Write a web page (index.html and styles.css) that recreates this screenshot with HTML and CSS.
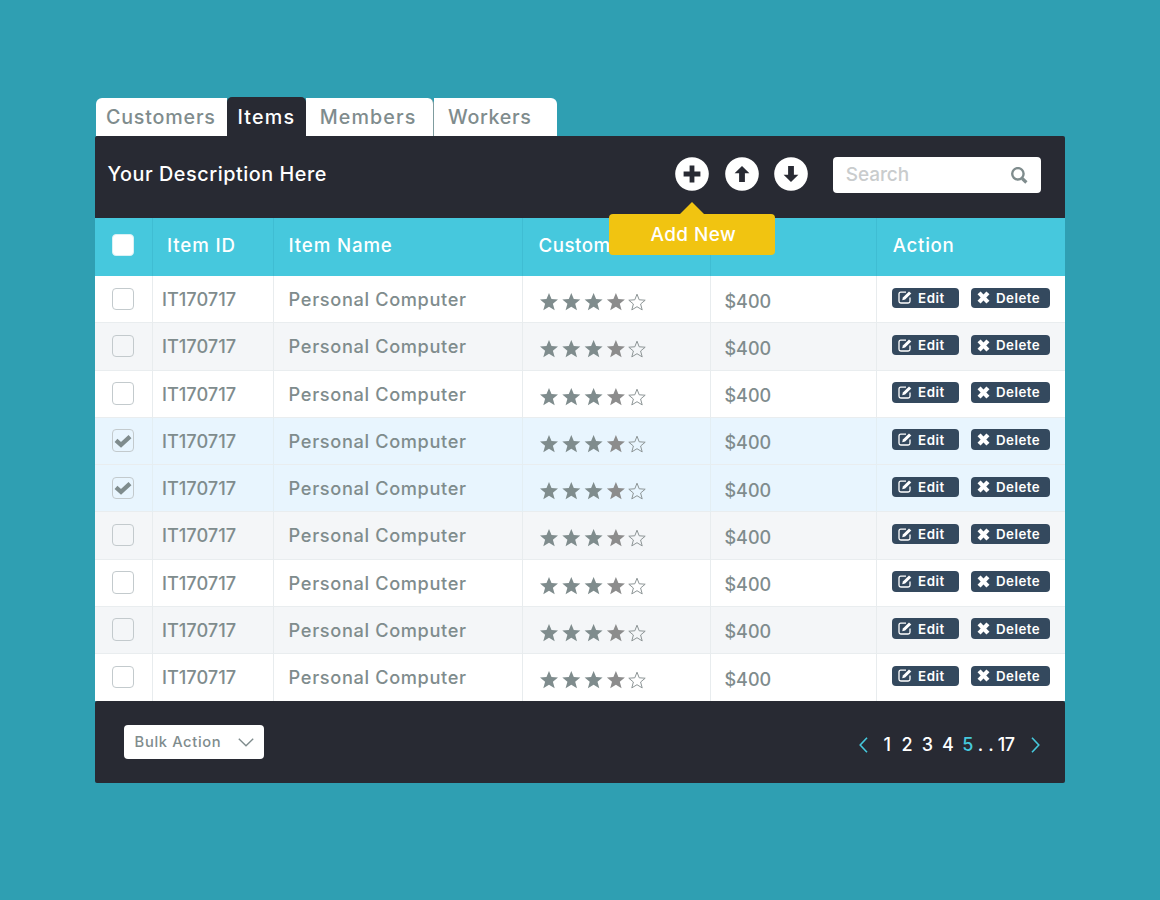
FILE: index.html
```html
<!DOCTYPE html>
<html lang="en">
<head>
<meta charset="utf-8">
<title>Items</title>
<link rel="stylesheet" href="styles.css">
</head>
<body>
<svg class="defs" width="0" height="0" aria-hidden="true">
  <symbol id="stars" viewBox="0 0 108 18">
    <g fill="#7f8c8d">
      <path id="star" d="M9 0l2.5 6.1 6.5.4-5.1 4.2 1.8 6.6L9 13.7l-5.7 3.6 1.8-6.6L0 6.5l6.500-.4z"/>
      <use href="#star" x="22.3"/>
      <use href="#star" x="44.6"/>
    </g>
    <use href="#star" x="66.9" fill="#8c8c8c"/>
    <path d="M97 1.2l2.2 5.6 6 .4-4.600 3.800 1.600 5.900-5.200-3.200-5.200 3.200 1.600-5.900-4.600-3.800 6-.4z" fill="none" stroke="#8d9596" stroke-width="1" stroke-linejoin="round"/>
  </symbol>
  <symbol id="edit" viewBox="0 0 14 13">
    <path d="M8 1.2H2.8Q1 1.2 1 3v7.2Q1 12 2.8 12h7.4q1.8 0 1.8-1.8V6.4" fill="none" stroke="#fff" stroke-width="1.3"/>
    <path d="M4.2 9.3l.7-2.900L11 .5l2.300 2L7.100 8.600z" fill="#fff"/>
  </symbol>
  <symbol id="cross" viewBox="0 0 12 12">
    <path d="M1.9 1.700l8.200 8.600M10.100 1.700l-8.200 8.600" stroke="#fff" stroke-width="3.900"/>
  </symbol>
  <symbol id="tick" viewBox="0 0 18 14">
    <path d="M2 6.400l5 4.400L16 2.600" fill="none" stroke="#7f8c8d" stroke-width="4.300"/>
  </symbol>
</svg>

<main class="panel">
  <nav class="tabs">
    <a class="tab tab-customers">Customers</a>
    <a class="tab tab-items active">Items</a>
    <a class="tab tab-members">Members</a>
    <a class="tab tab-workers">Workers</a>
  </nav>

  <header class="toolbar">
    <h1 class="title">Your Description Here</h1>
    <div class="tools">
      <div class="tool">
        <svg width="34" height="34" viewBox="0 0 34 34"><circle cx="17" cy="17" r="16.8" fill="#fff"/><path d="M17 8.6v16.8M8.6 17h16.8" stroke="#282a33" stroke-width="4.8"/></svg>
        <div class="tooltip">Add New</div>
      </div>
      <svg width="34" height="34" viewBox="0 0 34 34"><circle cx="17" cy="17" r="16.8" fill="#fff"/><path d="M17 9l7.4 7.2h-4.5V25h-5.8v-8.8H9.6z" fill="#282a33"/></svg>
      <svg class="down" width="34" height="34" viewBox="0 0 34 34"><circle cx="17" cy="17" r="16.8" fill="#fff"/><path d="M17 25l7.4-7.2h-4.5V9h-5.8v8.8H9.6z" fill="#282a33"/></svg>
    </div>
    <div class="search">
      <span>Search</span>
      <svg width="18" height="18" viewBox="0 0 18 18" fill="none" stroke="#7f8c8d"><circle cx="7.9" cy="6.8" r="5.700" stroke-width="2.400"/><path d="M12.2 11.500l4.200 4" stroke-width="3.200"/></svg>
    </div>
  </header>

  <section class="table">
    <div class="head">
      <div class="pick"><i class="box"></i></div>
      <div class="h-id">Item ID</div>
      <div class="h-name">Item Name</div>
      <div class="h-rate">Customer</div>
      <div></div>
      <div class="h-action">Action</div>
    </div>
    <div class="rows">
      <div class="row">
        <div class="pick"><i class="box"></i></div><div class="id">IT170717</div><div class="name">Personal Computer</div>
        <div class="rate"><svg><use href="#stars"/></svg></div><div class="price">$400</div>
        <div class="actions"><a class="btn edit"><svg><use href="#edit"/></svg>Edit</a><a class="btn delete"><svg><use href="#cross"/></svg>Delete</a></div>
      </div>
      <div class="row alt">
        <div class="pick"><i class="box"></i></div><div class="id">IT170717</div><div class="name">Personal Computer</div>
        <div class="rate"><svg><use href="#stars"/></svg></div><div class="price">$400</div>
        <div class="actions"><a class="btn edit"><svg><use href="#edit"/></svg>Edit</a><a class="btn delete"><svg><use href="#cross"/></svg>Delete</a></div>
      </div>
      <div class="row">
        <div class="pick"><i class="box"></i></div><div class="id">IT170717</div><div class="name">Personal Computer</div>
        <div class="rate"><svg><use href="#stars"/></svg></div><div class="price">$400</div>
        <div class="actions"><a class="btn edit"><svg><use href="#edit"/></svg>Edit</a><a class="btn delete"><svg><use href="#cross"/></svg>Delete</a></div>
      </div>
      <div class="row selected">
        <div class="pick"><i class="box"><svg><use href="#tick"/></svg></i></div><div class="id">IT170717</div><div class="name">Personal Computer</div>
        <div class="rate"><svg><use href="#stars"/></svg></div><div class="price">$400</div>
        <div class="actions"><a class="btn edit"><svg><use href="#edit"/></svg>Edit</a><a class="btn delete"><svg><use href="#cross"/></svg>Delete</a></div>
      </div>
      <div class="row selected">
        <div class="pick"><i class="box"><svg><use href="#tick"/></svg></i></div><div class="id">IT170717</div><div class="name">Personal Computer</div>
        <div class="rate"><svg><use href="#stars"/></svg></div><div class="price">$400</div>
        <div class="actions"><a class="btn edit"><svg><use href="#edit"/></svg>Edit</a><a class="btn delete"><svg><use href="#cross"/></svg>Delete</a></div>
      </div>
      <div class="row alt">
        <div class="pick"><i class="box"></i></div><div class="id">IT170717</div><div class="name">Personal Computer</div>
        <div class="rate"><svg><use href="#stars"/></svg></div><div class="price">$400</div>
        <div class="actions"><a class="btn edit"><svg><use href="#edit"/></svg>Edit</a><a class="btn delete"><svg><use href="#cross"/></svg>Delete</a></div>
      </div>
      <div class="row">
        <div class="pick"><i class="box"></i></div><div class="id">IT170717</div><div class="name">Personal Computer</div>
        <div class="rate"><svg><use href="#stars"/></svg></div><div class="price">$400</div>
        <div class="actions"><a class="btn edit"><svg><use href="#edit"/></svg>Edit</a><a class="btn delete"><svg><use href="#cross"/></svg>Delete</a></div>
      </div>
      <div class="row alt">
        <div class="pick"><i class="box"></i></div><div class="id">IT170717</div><div class="name">Personal Computer</div>
        <div class="rate"><svg><use href="#stars"/></svg></div><div class="price">$400</div>
        <div class="actions"><a class="btn edit"><svg><use href="#edit"/></svg>Edit</a><a class="btn delete"><svg><use href="#cross"/></svg>Delete</a></div>
      </div>
      <div class="row">
        <div class="pick"><i class="box"></i></div><div class="id">IT170717</div><div class="name">Personal Computer</div>
        <div class="rate"><svg><use href="#stars"/></svg></div><div class="price">$400</div>
        <div class="actions"><a class="btn edit"><svg><use href="#edit"/></svg>Edit</a><a class="btn delete"><svg><use href="#cross"/></svg>Delete</a></div>
      </div>
    </div>
  </section>

  <footer class="foot">
    <div class="bulk"><span>Bulk Action</span>
      <svg width="16" height="9" viewBox="0 0 16 9"><path d="M.8.8L8 7.8 15.2.8" fill="none" stroke="#7f8c8d" stroke-width="1.4"/></svg>
    </div>
    <div class="pages">
      <svg width="9" height="16" viewBox="0 0 9 16"><path d="M8 .8L1.2 8 8 15.2" fill="none" stroke="#46c8dc" stroke-width="1.6"/></svg>
      <span class="p1">1</span><span class="p2">2</span><span class="p3">3</span><span class="p4">4</span><span class="p5">5</span><span class="dots">..</span><span class="p17">17</span>
      <svg width="9" height="16" viewBox="0 0 9 16"><path d="M1 .8L7.8 8 1 15.2" fill="none" stroke="#46c8dc" stroke-width="1.6"/></svg>
    </div>
  </footer>
</main>
</body>
</html>
```
FILE: styles.css
```css
* { box-sizing: border-box; }
body { margin: 0; min-height: 900px; background: #2f9fb2; font-family: Inter, "Open Sans", sans-serif; font-weight: 500; color: #7f8c8d; }
.defs { position: absolute; }
svg { display: block; flex: none; }
.panel { width: 969.5px; margin-left: 95.3px; padding-top: 97px; }

.tabs { display: flex; align-items: flex-end; height: 39px; }
.tab { height: 38.5px; line-height: 39px; background: #fff; border-radius: 6px 6px 0 0; font-size: 19.7px; font-weight: 450; }
.tab-customers { width: 131px; margin-left: .7px; padding-left: 10px; letter-spacing: .8px; border-top-right-radius: 0; }
.tab-items { width: 79.5px; height: 39px; line-height: 40px; padding-left: 10.5px; letter-spacing: 1.2px; }
.tab.active { background: #282a33; color: #fff; font-weight: 550; border-radius: 5px 5px 0 0; }
.tab-members { width: 127.5px; padding-left: 13.2px; letter-spacing: 1.1px; border-top-left-radius: 0; border-right: 1px solid #7f9c9f; }
.tab-workers { width: 123px; padding-left: 14px; letter-spacing: .65px; border-top-left-radius: 0; }

.toolbar { display: flex; height: 82px; padding: 21px 24px 0 12.2px; background: #282a33; border-radius: 2px 2px 0 0; }
.title { flex: 1; margin: 0; height: 34px; line-height: 35px; font-size: 19.8px; font-weight: 500; letter-spacing: .55px; color: #fff; }
.tools { display: flex; gap: 15.6px; margin-right: 25.2px; }
.tool { position: relative; height: 34px; }
.down { margin-top: -.4px; }
.tooltip { position: absolute; z-index: 1; left: -66px; top: 57.3px; width: 166px; height: 41.2px; padding-left: 41.5px; border-radius: 4px; background: #f1c411; color: #fff; font-size: 19px; line-height: 41px; letter-spacing: .4px; }
.tooltip::before { content: ""; position: absolute; left: 70px; top: -12px; border: 13px solid transparent; border-top: 0; border-bottom-color: #f1c411; }
.search { display: flex; justify-content: space-between; width: 207.5px; height: 35.5px; padding: 9.5px 13px 0 12.5px; background: #fff; border-radius: 4px; }
.search span { line-height: 16px; font-size: 19px; letter-spacing: -.1px; color: #c9cccd; font-weight: 450; }

.head, .row { display: grid; grid-template-columns: 57px 121px 249px 188px 166px 188.5px; }
.head { height: 58px; background: #46c8dd; color: #fff; font-size: 18.7px; line-height: 55.5px; letter-spacing: .85px; }
.head > div + div { border-left: 1px solid #3fbdd3; }
.h-id { padding-left: 13.8px; }
.h-name { padding-left: 14.3px; }
.h-rate { padding-left: 15.3px; letter-spacing: .5px; }
.h-action { padding-left: 15.5px; letter-spacing: .7px; }

.rows { height: 424.5px; overflow: hidden; background: #fff; }
.row { height: 47.25px; line-height: 47.5px; font-size: 18.2px; font-weight: 450; border-bottom: 1px solid #e9edef; }
.row > div + div { border-left: 1px solid #e8ecee; }
.row:last-child { border-bottom: 0; }
.alt { background: #f4f6f8; }
.selected { background: #e8f5fe; }
.selected > div + div { border-left-color: #e3eef3; }
.pick { padding: 11.5px 0 0 16.5px; }
.head .pick { padding-top: 15.5px; }
.box { display: flex; justify-content: center; align-items: center; width: 22.5px; height: 22.5px; border: 1px solid #c3cacd; border-radius: 4px; }
.head .box { border-color: #d9f1f5; background: #fff; }
.box svg { width: 18px; height: 14px; }
.id { padding-left: 8.7px; }
.name { padding-left: 14.3px; letter-spacing: .65px; }
.rate { padding: 17.2px 0 0 16.8px; }
.rate svg { width: 108px; height: 18px; }
.price { padding: 1.5px 0 0 13.2px; font-size: 18px; }
.actions { display: flex; gap: 12px; padding: 11.5px 0 0 15px; }
.btn { display: flex; align-items: center; height: 20.7px; border-radius: 4px; background: #34495e; color: #fff; font-size: 13.3px; font-weight: 600; line-height: 20px; }
.edit { width: 66.7px; padding-left: 5.5px; gap: 6.3px; letter-spacing: .55px; }
.edit svg { width: 14px; height: 13px; }
.delete { width: 79px; padding-left: 6px; gap: 6px; letter-spacing: .5px; }
.delete svg { width: 13px; height: 13px; }

.foot { display: flex; justify-content: space-between; height: 82.5px; padding: 24.5px 25px 0 28.5px; background: #282a33; border-radius: 2px; }
.bulk { display: flex; justify-content: space-between; width: 140px; height: 33.5px; padding: 0 10px 0 10.8px; border-radius: 4px; background: #fff; font-size: 14.7px; line-height: 34.5px; letter-spacing: .65px; }
.bulk svg { margin-top: 13px; }
.pages { display: flex; align-items: center; height: 39px; color: #fff; font-size: 18px; font-weight: 550; }
.pages span { line-height: 39px; }
.p1 { width: 18px; margin-left: 15.5px; }
.p2, .p3, .p4 { width: 20.3px; }
.p5 { width: 15.5px; color: #46c8dc; }
.dots { width: 20px; letter-spacing: 5px; }
.p17 { width: 33px; letter-spacing: -.5px; }
```
